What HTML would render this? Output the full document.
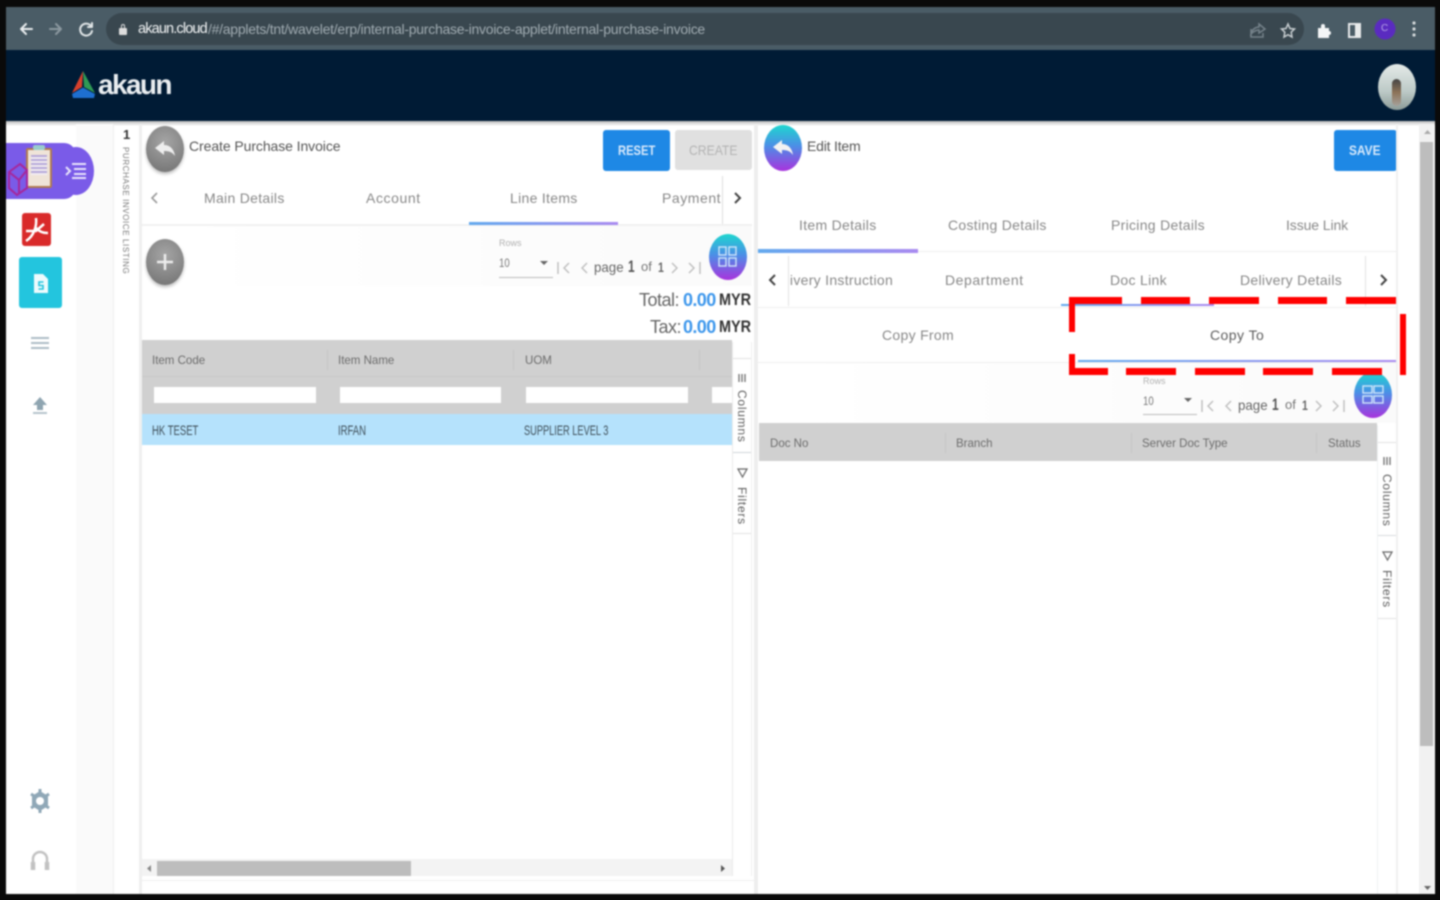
<!DOCTYPE html>
<html><head><meta charset="utf-8"><title>Akaun</title>
<style>
html,body{margin:0;padding:0;width:1440px;height:900px;overflow:hidden;background:#0a0a0a}
#r{position:absolute;left:0;top:0;width:1440px;height:900px;overflow:hidden;filter:blur(.85px);font-family:"Liberation Sans",sans-serif;background:#0a0a0a}
#r div,#r span.a,#r svg{position:absolute}
.t{position:absolute;white-space:nowrap;line-height:1;transform-origin:0 50%}
.g{color:#888;font-size:14px;letter-spacing:.3px}
.h{color:#6c6c6c;font-size:12px;transform:scaleX(.96)}
.grad{background:linear-gradient(180deg,#1ed6cf,#4b8fe6 45%,#a833dd)}
.gray{background:radial-gradient(circle at 50% 35%,#a5a5a5,#6f6f6f)}
.bar{background:linear-gradient(90deg,#62a9ee,#a98af0)}
.rd{background:#f00}
.v{font-size:12px;color:#5f5f5f;writing-mode:vertical-rl;letter-spacing:.75px}
</style></head><body><div id="r">

<!-- window -->
<div style="left:6px;top:7px;width:1429px;height:887px;background:#fff"></div>
<div style="left:6px;top:7px;width:1429px;height:43px;background:#4a5c66"></div>
<div style="left:106px;top:13px;width:1198px;height:32px;border-radius:16px;background:#39474f"></div>
<div style="left:6px;top:50px;width:1429px;height:72px;background:#001b35"></div>
<div style="left:6px;top:121px;width:1429px;height:5px;background:linear-gradient(#bbb,#fff)"></div>

<!-- browser icons -->
<svg style="left:17px;top:19px" width="80" height="20" fill="none" stroke-width="2" stroke-linecap="round" stroke-linejoin="round">
<path d="M15 10H4M9 5L4 10L9 15" stroke="#e8ecee"/>
<path d="M33 10H44M39 5L44 10L39 15" stroke="#8b989f"/>
<path d="M74 7A6 6 0 1 0 75 12M75 4V8H71" stroke="#dfe4e6"/>
</svg>
<div style="left:119px;top:28px;width:8px;height:7px;background:#ddd;border-radius:1px"></div>
<div style="left:121px;top:24px;width:4px;height:5px;border:1.5px solid #ddd;border-bottom:0;border-radius:3px 3px 0 0;box-sizing:border-box"></div>
<span class="t" style="left:138px;top:22px;font-size:14.5px;color:#f2f4f5;letter-spacing:-.85px">akaun.cloud</span>
<span class="t" style="left:208px;top:22px;font-size:14px;color:#a0abb1;letter-spacing:-.26px">/#/applets/tnt/wavelet/erp/internal-purchase-invoice-applet/internal-purchase-invoice</span>
<svg style="left:1248px;top:18px" width="180" height="24" fill="none" stroke-width="1.5">
<path d="M3 11V19H15V15M3 16C4 11 8 9 11 9V6L17 11L11 15V12C8 12 6 13 3 16Z" stroke="#75828a"/>
<path d="M40 6L42 10.5L46.5 11L43.2 14.2L44 19L40 16.7L36 19L36.8 14.2L33.5 11L38 10.5Z" stroke="#c8ced1"/>
<path d="M70 10H73V8A2 2 0 0 1 77 8V10H81V13A2 2 0 0 1 81 17V20H70Z" fill="#f3f5f6" stroke="none"/>
<rect x="100" y="5" width="13" height="15" fill="#e8eaeb" stroke="none"/><rect x="102" y="7" width="5" height="11" fill="#4a5c66" stroke="none"/>
<circle cx="137" cy="11" r="10.5" fill="#5a2bc0" stroke="none"/>
<circle cx="166" cy="5" r="1.6" fill="#d5dadc" stroke="none"/><circle cx="166" cy="11" r="1.6" fill="#d5dadc" stroke="none"/><circle cx="166" cy="17" r="1.6" fill="#d5dadc" stroke="none"/>
</svg>
<span class="t" style="left:1381px;top:24px;font-size:10px;color:#b7a4e8">C</span>

<!-- logo -->
<svg style="left:70px;top:70px" width="28" height="30"><path d="M13 1L2 23L12 17Z" fill="#d6402c"/><path d="M13 1L25 23L14 17Z" fill="#2f9a55"/><path d="M13 17.5L2 24L3 28H24L25 24Z" fill="#1e6fd0"/></svg>
<span class="t" style="left:98px;top:71px;font-size:28px;font-weight:700;color:#e9edf0;letter-spacing:-1.6px">akaun</span>
<!-- avatar -->
<div style="left:1378px;top:64px;width:38px;height:46px;border-radius:50%;background:linear-gradient(#e4eae8,#bcc9c6 60%,#8c9b98)"></div>
<div style="left:1392px;top:79px;width:9px;height:27px;border-radius:5px;background:linear-gradient(#444,#8d7358 50%,#a5a09a)"></div>

<!-- left sidebar -->
<div style="left:76px;top:124px;width:38px;height:770px;background:#fafafa;border-right:1px solid #eee;box-sizing:border-box"></div>
<div style="left:139px;top:124px;width:3px;height:770px;background:#efefef"></div>
<div style="left:6px;top:143px;width:70px;height:56px;background:#7a5be8;border-radius:0 12px 12px 0"></div>
<div style="left:58px;top:147px;width:36px;height:48px;background:#7a5be8;border-radius:50%"></div>
<div style="left:26px;top:148px;width:26px;height:40px;background:#efe4d8;border:2px solid #b07a50;box-sizing:border-box;border-radius:2px"></div>
<div style="left:31px;top:155px;width:16px;height:20px;background:repeating-linear-gradient(#b5a8d8 0 2px,#f2ecf2 2px 4px)"></div>
<div style="left:33px;top:145px;width:12px;height:5px;background:#9cc;border-radius:2px"></div>
<svg style="left:8px;top:158px" width="22" height="40" fill="none" stroke="#a6269a" stroke-width="2"><path d="M1 14L12 6L19 12V30L9 37L1 30ZM1 14L11 22L19 12M11 22V36"/></svg>
<svg style="left:64px;top:162px" width="24" height="18" fill="none" stroke="#e8e4fb" stroke-width="2"><path d="M8 2H22M10 7H22M10 12H22M8 16H22M2 5L6 9L2 13"/></svg>
<div style="left:22px;top:213px;width:29px;height:33px;background:#d92a2a;border-radius:3px"></div>
<svg style="left:24px;top:216px" width="25" height="28" fill="none" stroke="#fff" stroke-width="2.5"><path d="M12 2C13 10 10 20 2 25M12 12C16 16 19 17 24 17M2 15H12L20 8"/></svg>
<div style="left:19px;top:257px;width:43px;height:51px;background:#23c5de;border-radius:3px"></div>
<svg style="left:33px;top:273px" width="16" height="21"><path d="M1 1H10L15 6V20H1Z" fill="#eefbfd"/><path d="M10.5 9H6V12.5H10V16H5.5" fill="none" stroke="#23c5de" stroke-width="1.6"/></svg>
<svg style="left:30px;top:336px" width="20" height="16" stroke="#aebdc6" stroke-width="2"><path d="M1 2H19M1 7H19M1 12H19"/></svg>
<svg style="left:32px;top:396px" width="16" height="20"><path d="M8 1L15 9H11V14H5V9H1Z" fill="#8fa5b1"/><rect x="1" y="16" width="14" height="2" fill="#b5c4cc"/></svg>
<svg style="left:29px;top:788px" width="22" height="26"><path d="M11 3L19 8V18L11 23L3 18V8Z" fill="#90a8b7"/><path d="M11 1V5M11 21V25M2 6L6 8.5M20 6L16 8.5M2 20L6 17.5M20 20L16 17.5" stroke="#90a8b7" stroke-width="3"/><circle cx="11" cy="13" r="4" fill="#fff"/></svg>
<svg style="left:30px;top:850px" width="20" height="22" fill="none" stroke="#c2c2c2" stroke-width="2.5"><path d="M3 14V9A7 7 0 0 1 17 9V14"/><path d="M3 12V20M17 12V20" stroke-width="4.5"/></svg>

<!-- listing strip -->
<span class="t" style="left:123px;top:128px;font-size:13px;font-weight:700;color:#333">1</span>
<span class="t" style="left:121px;top:147px;font-size:8px;color:#777;writing-mode:vertical-rl;letter-spacing:.6px">PURCHASE INVOICE LISTING</span>

<!-- LEFT PANEL -->
<div class="gray" style="left:146px;top:126px;width:38px;height:46px;border-radius:50%;box-shadow:0 2px 3px #bbb"></div>
<svg style="left:154px;top:139px" width="22" height="20"><path d="M10 2V6C16 6 20 10 21 17C18 13 15 12 10 12V16L1 9Z" fill="#eee"/></svg>
<span class="t" style="left:189px;top:139px;font-size:14px;color:#555;letter-spacing:-.08px">Create Purchase Invoice</span>
<div style="left:603px;top:130px;width:67px;height:41px;background:#1e88e5;border-radius:3px"></div>
<span class="t" style="left:618px;top:143px;font-size:14px;font-weight:700;color:#d8e9fb;transform:scaleX(.8)">RESET</span>
<div style="left:675px;top:130px;width:77px;height:40px;background:#e0e0e0;border-radius:3px"></div>
<span class="t" style="left:689px;top:143px;font-size:14px;color:#b3b3b3;transform:scaleX(.87)">CREATE</span>

<svg style="left:150px;top:191px" width="10" height="14" fill="none" stroke="#999" stroke-width="1.6"><path d="M7 2L2 7L7 12"/></svg>
<span class="t g" style="left:204px;top:191px">Main Details</span>
<span class="t g" style="left:366px;top:191px;letter-spacing:.6px">Account</span>
<span class="t g" style="left:510px;top:191px">Line Items</span>
<span class="t g" style="left:662px;top:191px;letter-spacing:.55px">Payment</span>
<div style="left:722px;top:176px;width:1px;height:48px;background:#ddd"></div>
<svg style="left:732px;top:191px" width="10" height="14" fill="none" stroke="#444" stroke-width="2"><path d="M3 2L8 7L3 12"/></svg>
<div style="left:142px;top:224px;width:610px;height:2px;background:#f1f1f1"></div>
<div class="bar" style="left:469px;top:222px;width:149px;height:3px"></div>

<div style="left:142px;top:226px;width:610px;height:60px;background:linear-gradient(90deg,#fff,#fafafa)"></div>
<div class="gray" style="left:146px;top:239px;width:38px;height:46px;border-radius:50%;box-shadow:0 2px 3px #bbb"></div>
<svg style="left:155px;top:252px" width="20" height="20" stroke="#ececec" stroke-width="2.5"><path d="M10 2V18M2 10H18"/></svg>

<span class="t" style="left:499px;top:239px;font-size:9px;color:#b0b0b0">Rows</span>
<span class="t" style="left:499px;top:257px;font-size:12px;color:#777;transform:scaleX(.8)">10</span>
<svg style="left:539px;top:260px" width="10" height="6"><path d="M1 1H9L5 5Z" fill="#666"/></svg>
<div style="left:499px;top:277px;width:54px;height:1px;background:#bbb"></div>
<svg style="left:556px;top:260px" width="148" height="16" fill="none" stroke="#bdbdbd" stroke-width="1.4"><path d="M2 2V14M13 3L8 8L13 13M31 3L26 8L31 13M116 3L121 8L116 13M133 3L138 8L133 13M144 2V14"/></svg>
<span class="t" style="left:594px;top:260px;font-size:14px;color:#666;transform:scaleX(.95)">page</span>
<span class="t" style="left:628px;top:258px;font-size:17px;font-weight:700;color:#555;transform:scaleX(.7)">1</span>
<span class="t" style="left:641px;top:260px;font-size:13px;color:#777">of</span>
<span class="t" style="left:658px;top:260px;font-size:14px;font-weight:700;color:#666;transform:scaleX(.75)">1</span>
<div class="grad" style="left:709px;top:234px;width:38px;height:46px;border-radius:50%"></div>
<svg style="left:718px;top:246px" width="20" height="22" fill="none" stroke="#cfe6fa" stroke-width="1.4"><rect x="1" y="1" width="7" height="8"/><rect x="11" y="1" width="7" height="8"/><rect x="1" y="12" width="7" height="8"/><rect x="11" y="12" width="7" height="8"/></svg>

<span class="t" style="left:639px;top:291px;font-size:18px;color:#666;letter-spacing:-.5px">Total:</span>
<span class="t" style="left:683px;top:291px;font-size:18px;font-weight:700;color:#3d97ec;letter-spacing:-.6px">0.00</span>
<span class="t" style="left:719px;top:291px;font-size:17px;font-weight:700;color:#333;transform:scaleX(.85)">MYR</span>
<span class="t" style="left:650px;top:318px;font-size:18px;color:#666;letter-spacing:-.5px">Tax:</span>
<span class="t" style="left:683px;top:318px;font-size:18px;font-weight:700;color:#3d97ec;letter-spacing:-.6px">0.00</span>
<span class="t" style="left:719px;top:318px;font-size:17px;font-weight:700;color:#333;transform:scaleX(.85)">MYR</span>

<!-- left grid -->
<div style="left:142px;top:340px;width:590px;height:74px;background:#d0d0d0"></div>
<div style="left:142px;top:376px;width:590px;height:1px;background:#c8c8c8"></div>
<div style="left:327px;top:350px;width:1px;height:20px;background:#c5c5c5"></div>
<div style="left:513px;top:350px;width:1px;height:20px;background:#c5c5c5"></div>
<div style="left:699px;top:350px;width:1px;height:20px;background:#c5c5c5"></div>
<span class="t h" style="left:152px;top:354px">Item Code</span>
<span class="t h" style="left:338px;top:354px">Item Name</span>
<span class="t h" style="left:525px;top:354px">UOM</span>
<div style="left:154px;top:387px;width:162px;height:16px;background:#fff"></div>
<div style="left:340px;top:387px;width:161px;height:16px;background:#fff"></div>
<div style="left:526px;top:387px;width:162px;height:16px;background:#fff"></div>
<div style="left:712px;top:387px;width:20px;height:16px;background:#fff"></div>
<div style="left:142px;top:414px;width:590px;height:31px;background:#b5e2fc"></div>
<span class="t" style="left:152px;top:423px;font-size:14px;color:#3f4f59;transform:scaleX(.68)">HK TESET</span>
<span class="t" style="left:338px;top:423px;font-size:14px;color:#3f4f59;transform:scaleX(.68)">IRFAN</span>
<span class="t" style="left:524px;top:423px;font-size:14px;color:#3f4f59;transform:scaleX(.66)">SUPPLIER LEVEL 3</span>

<!-- left side tabs -->
<div style="left:732px;top:342px;width:1px;height:534px;background:#eaeaea"></div>
<div style="left:751px;top:342px;width:1px;height:534px;background:#efefef"></div>
<div style="left:733px;top:358px;width:18px;height:1px;background:#e2e2e2"></div>
<div style="left:733px;top:452px;width:18px;height:1px;background:#d0d6da"></div>
<div style="left:733px;top:533px;width:18px;height:1px;background:#e2e2e2"></div>
<svg style="left:738px;top:373px" width="10" height="10" stroke="#777" stroke-width="1.4"><path d="M1 1V9M4 1V9M7 1V9"/></svg>
<span class="t v" style="left:736px;top:390px">Columns</span>
<svg style="left:737px;top:468px" width="11" height="11" fill="none" stroke="#666" stroke-width="1.2"><path d="M1 1H10L5.5 9Z"/></svg>
<span class="t v" style="left:736px;top:487px">Filters</span>

<!-- left scrollbar -->
<div style="left:142px;top:859px;width:590px;height:17px;background:#f3f3f3"></div>
<div style="left:157px;top:861px;width:254px;height:15px;background:#bdbdbd"></div>
<svg style="left:146px;top:864px" width="6" height="9"><path d="M5 1V8L1 4.5Z" fill="#888"/></svg>
<svg style="left:720px;top:864px" width="6" height="9"><path d="M1 1V8L5 4.5Z" fill="#555"/></svg>
<div style="left:142px;top:880px;width:614px;height:1px;background:#efefef"></div>

<!-- divider -->
<div style="left:754px;top:124px;width:4px;height:770px;background:#eeeeee"></div>

<!-- RIGHT PANEL -->
<div class="grad" style="left:764px;top:125px;width:38px;height:46px;border-radius:50%"></div>
<svg style="left:772px;top:138px" width="22" height="20"><path d="M10 2V6C16 6 20 10 21 17C18 13 15 12 10 12V16L1 9Z" fill="#f2f2f2"/></svg>
<span class="t" style="left:807px;top:139px;font-size:14px;color:#555;letter-spacing:-.2px">Edit Item</span>
<div style="left:1334px;top:130px;width:63px;height:41px;background:#1e88e5;border-radius:3px"></div>
<span class="t" style="left:1349px;top:143px;font-size:14px;font-weight:700;color:#d8e9fb;transform:scaleX(.85)">SAVE</span>

<span class="t g" style="left:799px;top:218px">Item Details</span>
<span class="t g" style="left:948px;top:218px">Costing Details</span>
<span class="t g" style="left:1111px;top:218px">Pricing Details</span>
<span class="t g" style="left:1286px;top:218px;letter-spacing:-.1px">Issue Link</span>
<div style="left:758px;top:251px;width:640px;height:1px;background:#eee"></div>
<div class="bar" style="left:758px;top:249px;width:160px;height:4px"></div>

<div style="left:788px;top:256px;width:1px;height:50px;background:#e2e2e2"></div>
<div style="left:1365px;top:256px;width:1px;height:50px;background:#e2e2e2"></div>
<svg style="left:768px;top:273px" width="10" height="14" fill="none" stroke="#444" stroke-width="2"><path d="M7 2L2 7L7 12"/></svg>
<svg style="left:1378px;top:273px" width="10" height="14" fill="none" stroke="#444" stroke-width="2"><path d="M3 2L8 7L3 12"/></svg>
<div style="left:789px;top:270px;width:110px;height:22px;overflow:hidden"><span class="t g" style="left:-21px;top:3px">Delivery Instruction</span></div>
<span class="t g" style="left:945px;top:273px;letter-spacing:.55px">Department</span>
<span class="t g" style="left:1110px;top:273px">Doc Link</span>
<span class="t g" style="left:1240px;top:273px">Delivery Details</span>
<div style="left:758px;top:307px;width:640px;height:1px;background:#eee"></div>
<div class="bar" style="left:1061px;top:304px;width:153px;height:2px"></div>

<span class="t g" style="left:882px;top:328px">Copy From</span>
<span class="t" style="left:1210px;top:328px;font-size:14px;color:#5c5c5c;letter-spacing:.45px">Copy To</span>
<div style="left:758px;top:362px;width:640px;height:1px;background:#eee"></div>
<div class="bar" style="left:1078px;top:360px;width:319px;height:2px"></div>

<div style="left:758px;top:363px;width:640px;height:60px;background:linear-gradient(90deg,#fff,#fafafa)"></div>
<span class="t" style="left:1143px;top:377px;font-size:9px;color:#b0b0b0">Rows</span>
<span class="t" style="left:1143px;top:395px;font-size:12px;color:#777;transform:scaleX(.8)">10</span>
<svg style="left:1183px;top:397px" width="10" height="6"><path d="M1 1H9L5 5Z" fill="#666"/></svg>
<div style="left:1143px;top:414px;width:54px;height:1px;background:#bbb"></div>
<svg style="left:1200px;top:398px" width="148" height="16" fill="none" stroke="#bdbdbd" stroke-width="1.4"><path d="M2 2V14M13 3L8 8L13 13M31 3L26 8L31 13M116 3L121 8L116 13M133 3L138 8L133 13M144 2V14"/></svg>
<span class="t" style="left:1238px;top:398px;font-size:14px;color:#666;transform:scaleX(.95)">page</span>
<span class="t" style="left:1272px;top:396px;font-size:17px;font-weight:700;color:#555;transform:scaleX(.7)">1</span>
<span class="t" style="left:1285px;top:398px;font-size:13px;color:#777">of</span>
<span class="t" style="left:1302px;top:398px;font-size:14px;font-weight:700;color:#666;transform:scaleX(.75)">1</span>
<div class="grad" style="left:1354px;top:372px;width:38px;height:46px;border-radius:50%"></div>
<svg style="left:1362px;top:385px" width="22" height="20" fill="none" stroke="#cfe6fa" stroke-width="1.4"><rect x="1" y="1" width="9" height="7"/><rect x="12" y="1" width="9" height="7"/><rect x="1" y="11" width="9" height="7"/><rect x="12" y="11" width="9" height="7"/></svg>

<!-- right grid -->
<div style="left:759px;top:423px;width:618px;height:38px;background:#d0d0d0"></div>
<div style="left:945px;top:433px;width:1px;height:20px;background:#c5c5c5"></div>
<div style="left:1131px;top:433px;width:1px;height:20px;background:#c5c5c5"></div>
<div style="left:1316px;top:433px;width:1px;height:20px;background:#c5c5c5"></div>
<span class="t h" style="left:770px;top:437px">Doc No</span>
<span class="t h" style="left:956px;top:437px">Branch</span>
<span class="t h" style="left:1142px;top:437px">Server Doc Type</span>
<span class="t h" style="left:1328px;top:437px">Status</span>

<!-- right side tabs -->
<div style="left:1377px;top:425px;width:1px;height:469px;background:#eef0f2"></div>
<div style="left:1396px;top:124px;width:2px;height:770px;background:#f0f0f0"></div>
<div style="left:1378px;top:442px;width:18px;height:1px;background:#e2e2e2"></div>
<div style="left:1378px;top:535px;width:18px;height:1px;background:#d8dcde"></div>
<div style="left:1378px;top:618px;width:18px;height:1px;background:#e2e2e2"></div>
<svg style="left:1383px;top:456px" width="10" height="10" stroke="#777" stroke-width="1.4"><path d="M1 1V9M4 1V9M7 1V9"/></svg>
<span class="t v" style="left:1381px;top:474px">Columns</span>
<svg style="left:1382px;top:551px" width="11" height="11" fill="none" stroke="#666" stroke-width="1.2"><path d="M1 1H10L5.5 9Z"/></svg>
<span class="t v" style="left:1381px;top:570px">Filters</span>

<!-- page scrollbar -->
<div style="left:1419px;top:124px;width:15px;height:770px;background:#f1f1f1"></div>
<div style="left:1420px;top:142px;width:13px;height:604px;background:#bdbdbd"></div>
<svg style="left:1423px;top:129px" width="9" height="6"><path d="M1 5H8L4.5 1Z" fill="#aaa"/></svg>
<svg style="left:1423px;top:885px" width="9" height="6"><path d="M1 1H8L4.5 5Z" fill="#666"/></svg>

<!-- red dashed highlight -->
<div class="rd" style="left:1069px;top:297px;width:53px;height:7px"></div>
<div class="rd" style="left:1141px;top:297px;width:49px;height:7px"></div>
<div class="rd" style="left:1209px;top:297px;width:50px;height:7px"></div>
<div class="rd" style="left:1278px;top:297px;width:49px;height:7px"></div>
<div class="rd" style="left:1346px;top:297px;width:50px;height:7px"></div>
<div class="rd" style="left:1069px;top:368px;width:39px;height:7px"></div>
<div class="rd" style="left:1126px;top:368px;width:50px;height:7px"></div>
<div class="rd" style="left:1195px;top:368px;width:50px;height:7px"></div>
<div class="rd" style="left:1263px;top:368px;width:50px;height:7px"></div>
<div class="rd" style="left:1332px;top:368px;width:50px;height:7px"></div>
<div class="rd" style="left:1069px;top:297px;width:6px;height:35px"></div>
<div class="rd" style="left:1069px;top:354px;width:6px;height:21px"></div>
<div class="rd" style="left:1400px;top:314px;width:6px;height:61px"></div>

</div></body></html>
